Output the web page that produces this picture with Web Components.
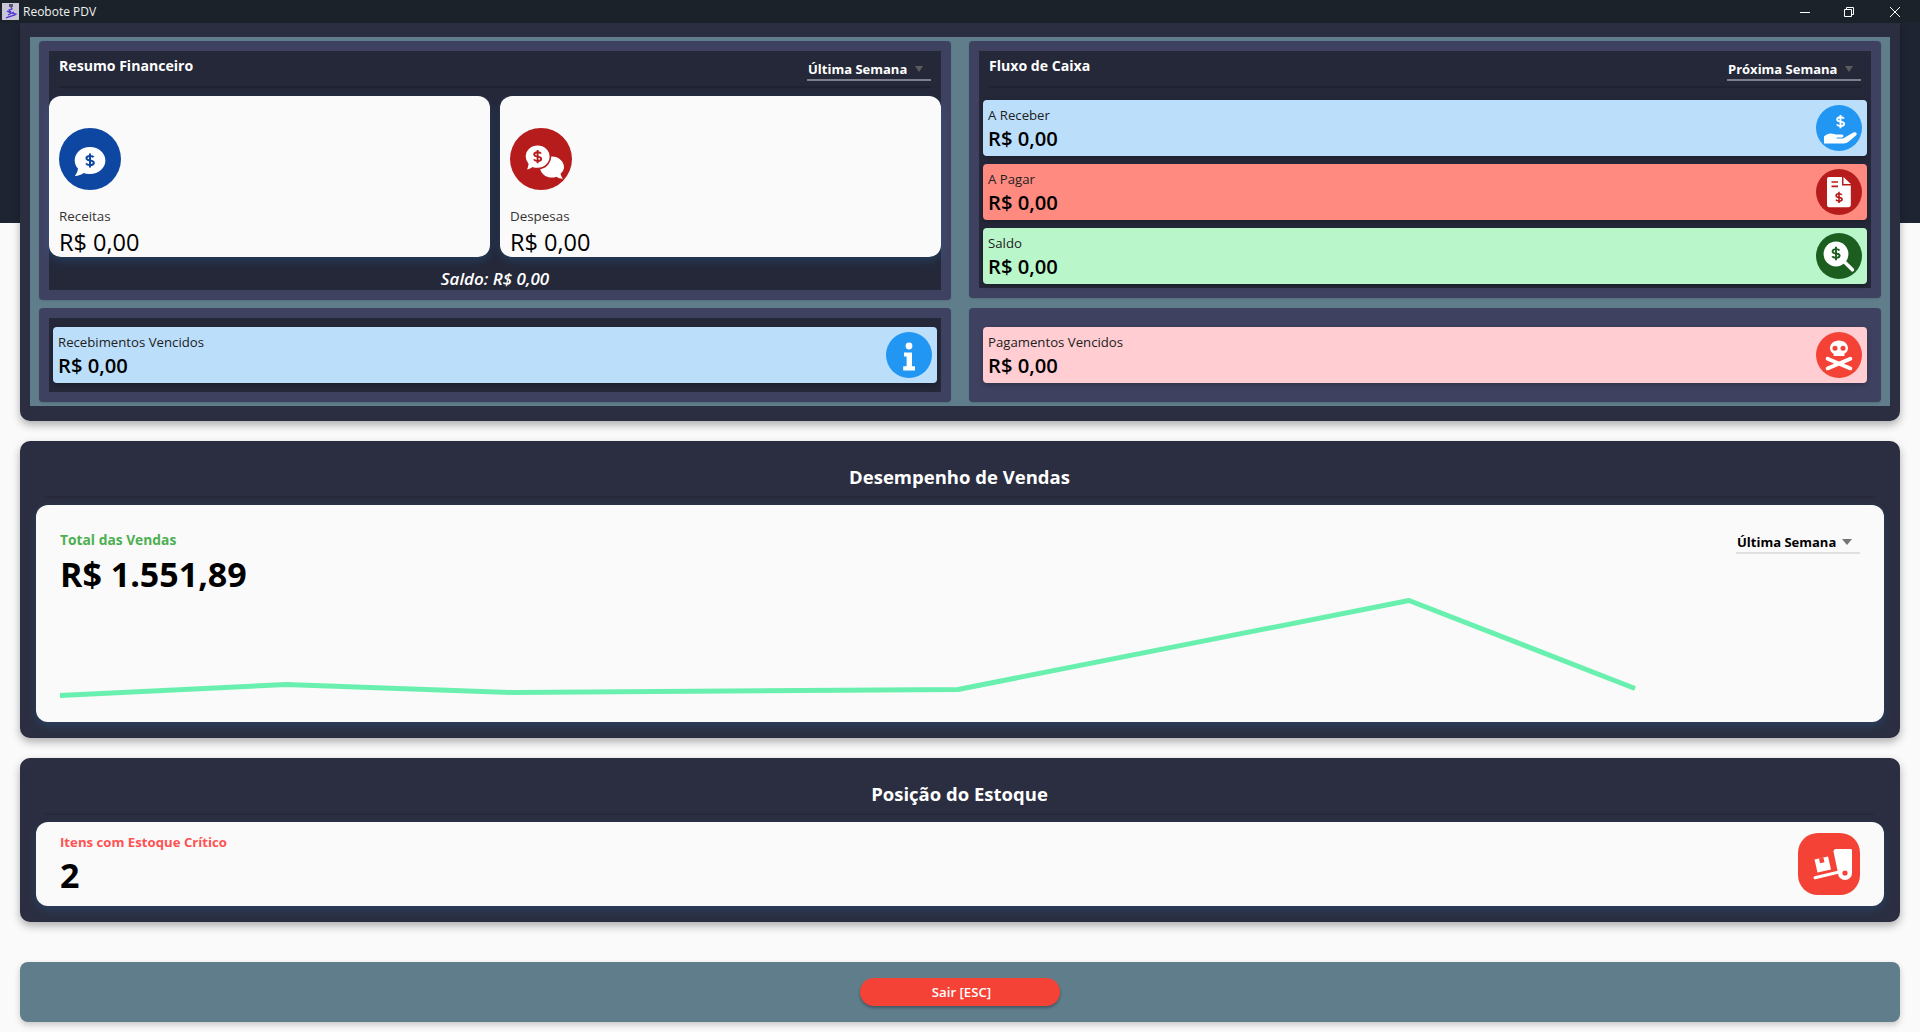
<!DOCTYPE html>
<html lang="pt-BR">
<head>
<meta charset="utf-8">
<title>Reobote PDV</title>
<style>
  html, body { margin: 0; height: 100%; }
  body { font-family: "Open Sans", "Noto Sans", sans-serif; background: #fafafa; overflow: hidden; }
</style>
</head>
<body>
<app-window>
  <title-bar slot="bar">Reobote PDV</title-bar>

  <finance-board>
    <dash-card>
      <card-header heading="Resumo Financeiro" period="Última Semana"></card-header>
      <div style="display:grid;grid-template-columns:1fr 1fr;gap:10px;margin-top:8px">
        <money-card label="Receitas" value="R$ 0,00" icon="income" color="#0d47a1"></money-card>
        <money-card label="Despesas" value="R$ 0,00" icon="expense" color="#b71c1c"></money-card>
      </div>
      <div style="height:33px;box-sizing:border-box;padding-top:10px;display:flex;align-items:center;justify-content:center;color:#fff;font:italic 600 17px 'Open Sans',sans-serif">Saldo: R$ 0,00</div>
    </dash-card>

    <dash-card>
      <card-header heading="Fluxo de Caixa" period="Próxima Semana"></card-header>
      <div style="display:flex;flex-direction:column;gap:8px;padding:12px 4px 4px">
        <flow-row label="A Receber" value="R$ 0,00" icon="hand" tint="#bbdefb" color="#2196f3"></flow-row>
        <flow-row label="A Pagar" value="R$ 0,00" icon="bill" tint="#ff8a80" color="#b71c1c"></flow-row>
        <flow-row label="Saldo" value="R$ 0,00" icon="search" tint="#b9f6ca" color="#1b5e20"></flow-row>
      </div>
    </dash-card>

    <dash-card>
      <div style="padding:9px 4px">
        <flow-row label="Recebimentos Vencidos" value="R$ 0,00" icon="info" tint="#bbdefb" color="#2196f3"></flow-row>
      </div>
    </dash-card>

    <dash-card plain>
      <div style="padding:9px 4px">
        <flow-row label="Pagamentos Vencidos" value="R$ 0,00" icon="skull" tint="#ffcdd2" color="#f44336"></flow-row>
      </div>
    </dash-card>
  </finance-board>

  <dash-panel heading="Desempenho de Vendas">
    <sales-chart label="Total das Vendas" value="R$ 1.551,89" period="Última Semana"></sales-chart>
  </dash-panel>

  <dash-panel heading="Posição do Estoque">
    <stock-card label="Itens com Estoque Crítico" value="2"></stock-card>
  </dash-panel>

  <exit-bar>Sair [ESC]</exit-bar>
</app-window>

<script>
const dollar = (x, y, s, c) => `<g transform="translate(${x} ${y}) scale(${s})" fill="none" stroke="${c}" stroke-width="2" stroke-linecap="butt">
  <path d="M3.6 -3.2C3 -4.4 1.8 -4.6 0 -4.6C-2.2 -4.6 -3.6 -3.6 -3.6 -2.2C-3.6 1 3.8 -1 3.8 2.2C3.8 3.8 2.2 4.6 0 4.6C-1.8 4.6 -3.2 4.2 -3.9 2.9"/>
  <path d="M0 -7V7"/></g>`

const icons = {
  income: c => `<svg viewBox="0 0 62 62"><path fill="#fff" d="M31 19C22 19 15.7 25 15.7 32.5C15.7 35.5 17 38.6 19 40.6C18.8 43 17.6 46 15.8 48C19.4 48 22.6 46.6 24.6 45C26.4 45.6 28.6 46 31 46C39.6 46 46.4 40 46.4 32.5C46.4 25 39.6 19 31 19Z"/>${dollar(31, 32.5, 1, c)}</svg>`,
  expense: c => `<svg viewBox="0 0 62 62"><path fill="#fff" d="M42 28.6C35.4 28.6 30 33.4 30 39.2C30 45 35.4 49.6 42 49.6C43.6 49.6 45 49.4 46.4 48.8C48 50 50.2 50.8 53 50.8C51.6 49.4 50.8 47.6 50.6 45.6C52.6 43.8 54 41.6 54 39.2C54 33.4 48.6 28.6 42 28.6Z"/><path fill="#fff" stroke="${c}" stroke-width="1.6" d="M27.6 16.7C20.6 16.7 14.9 22 14.9 28.6C14.9 31.6 16 34 17.8 36C17.6 38.2 16.8 40.6 15.4 42.6C18.4 42.6 21 41.4 22.8 40C24.2 40.4 25.8 40.6 27.6 40.6C34.6 40.6 40.4 35.2 40.4 28.6C40.4 22 34.6 16.7 27.6 16.7Z"/>${dollar(27.6, 28.6, .95, c)}</svg>`,
  hand: c => `<svg viewBox="0 0 46 46">${dollar(24.5, 16.6, .95, '#fff')}<path fill="#fff" d="M8 31.5C10 29.5 12.4 28.4 15 28.4C17.4 28.4 19 29.6 21 29.6H26C27.8 29.6 28 32.6 26 32.6H20.6V33.6H27L37.4 27.6C39.6 26.4 41.8 28.2 40.2 30.2L32.8 36.6C31.4 37.8 30 38.6 27.6 38.6H8Z"/></svg>`,
  bill: c => `<svg viewBox="0 0 46 46"><path fill="#fff" d="M13 8H26V16.5H34.8V36C34.8 37.2 33.8 38.2 32.6 38.2H13C11.8 38.2 11 37.2 11 36V10C11 8.8 11.8 8 13 8Z"/><path fill="#fff" d="M27.5 8L34.8 15H27.5Z"/><path fill="none" stroke="${c}" stroke-width="1.6" d="M15.5 13H22M15.5 17.4H22"/>${dollar(23, 28.4, .8, c)}</svg>`,
  search: c => `<svg viewBox="0 0 46 46"><circle cx="20" cy="21" r="12.4" fill="#fff"/><path stroke="#fff" stroke-width="3.6" stroke-linecap="round" d="M29 29.5L36.4 36.8"/>${dollar(20, 20.5, .95, c)}</svg>`,
  info: () => `<svg viewBox="0 0 46 46"><circle cx="23" cy="14" r="3.4" fill="#fff"/><path fill="#fff" d="M18 20.4H26V34.2H29V38.4H17.2V34.2H20.6V24.4H18Z"/></svg>`,
  skull: c => `<svg viewBox="0 0 46 46"><path fill="#fff" d="M23 8.4C17.6 8.4 14 12 14 16C14 18.6 15.4 20.6 17.6 21.8V24H28.4V21.8C30.6 20.6 32 18.6 32 16C32 12 28.4 8.4 23 8.4Z"/><circle cx="19" cy="16.2" r="2.5" fill="${c}"/><circle cx="27" cy="16.2" r="2.5" fill="${c}"/><path stroke="#fff" stroke-width="3.8" stroke-linecap="round" d="M11.6 26.8L34.4 36.4M34.4 26.8L11.6 36.4"/></svg>`,
  dolly: c => `<svg viewBox="0 0 62 62"><path fill="#fff" d="M35.5 18.5C35.5 17 36.5 16 38 16H52.5C53.5 16 54 16.5 54 17.5V40H40Z"/><circle cx="47" cy="40" r="7" fill="#fff"/><circle cx="47" cy="40" r="2.6" fill="${c}"/><path stroke="#fff" stroke-width="3" stroke-linecap="round" d="M17 44.7L41 39"/><path fill="#fff" d="M16.5 26.5L30 23.5L33 36.5L19.5 39.5Z"/><path fill="${c}" d="M21 25.5L25.4 24.5L26.4 29.2L22 30.2Z"/></svg>`
}

const selectTemplate = document.createElement('template')
selectTemplate.innerHTML = `
  <style>
    :host { display: inline-flex; align-items: center; justify-content: space-between; box-sizing: border-box;
      width: var(--select-width, 124px); height: 22px; padding: 0 8px 0 1px; font: 700 13px/var(--select-lh, 20px) "Open Sans", sans-serif;
      color: var(--select-color, #fff); border-bottom: 2px solid var(--select-line, #7d7f8c); }
    i { width: 0; height: 0; border: var(--select-arrow-size, 4.5px) solid transparent; border-top: 6px solid var(--select-arrow, #5c5c5c); border-bottom: 0; }
  </style>
  <span></span><i></i>
`

class PeriodSelect extends HTMLElement {
  static observedAttributes = ['label']

  constructor() {
    super()
    this.attachShadow({ mode: 'open' })
    this.shadowRoot.appendChild(selectTemplate.content.cloneNode(true))
  }

  attributeChangedCallback(name, oldValue, value) {
    this.shadowRoot.querySelector('span').textContent = value
  }
}
customElements.define('period-select', PeriodSelect)

const barTemplate = document.createElement('template')
barTemplate.innerHTML = `
  <style>
    :host { display: flex; align-items: center; height: 23px; background: #1b2229; color: #f2f2f2; font: 12px "Open Sans", sans-serif; }
    svg.logo { width: 17px; height: 17px; margin: 0 4px 0 2px; }
    .grow { flex: 1; }
    button { all: unset; width: 46px; height: 23px; display: flex; align-items: center; justify-content: center; }
    button svg { width: 12px; height: 12px; fill: none; stroke: #fff; stroke-width: 1; }
  </style>
  <svg class="logo" viewBox="0 0 17 17">
    <rect width="17" height="17" fill="#c9c6d6"/>
    <path fill="none" stroke="#4a2fd6" stroke-width="1.2" d="M4 15C7 13 12 13 14 11C11 10 7 10 5 8M8 2L10 6L7 7L9 9M6 12L12 9"/>
    <path fill="#5b5570" d="M7 1H11V4H7Z"/>
  </svg>
  <span><slot></slot></span>
  <span class="grow"></span>
  <button style="margin-right:-1px;transform:translateX(1px)"><svg viewBox="0 0 12 12"><path d="M1 6.5H11"/></svg></button>
  <button><svg viewBox="0 0 12 12"><path d="M1.5 3.5H8.5V10.5H1.5ZM3.5 3.5V1.5H10.5V8.5H8.5"/></svg></button>
  <button style="margin-right:2px"><svg viewBox="0 0 12 12"><path d="M1 1L11 11M11 1L1 11"/></svg></button>
`

class TitleBar extends HTMLElement {
  constructor() {
    super()
    this.attachShadow({ mode: 'open' })
    this.shadowRoot.appendChild(barTemplate.content.cloneNode(true))
  }
}
customElements.define('title-bar', TitleBar)

const windowTemplate = document.createElement('template')
windowTemplate.innerHTML = `
  <style>
    :host { display: flex; flex-direction: column; height: 1032px;
      background: linear-gradient(#1f2433 0 223px, #fafafa 223px); }
    main { display: flex; flex-direction: column; padding: 0 20px; }
  </style>
  <slot name="bar"></slot>
  <main><slot></slot></main>
`

class AppWindow extends HTMLElement {
  constructor() {
    super()
    this.attachShadow({ mode: 'open' })
    this.shadowRoot.appendChild(windowTemplate.content.cloneNode(true))
  }
}
customElements.define('app-window', AppWindow)

const boardTemplate = document.createElement('template')
boardTemplate.innerHTML = `
  <style>
    :host { display: block; height: 398px; box-sizing: border-box; padding: 14px 10px 15px; background: #2b2e40;
      border-radius: 0 0 10px 10px; box-shadow: 0 4px 8px rgba(0,0,0,.3); }
    .teal { display: grid; grid-template-columns: 912px 912px; grid-template-rows: 259px 94px; column-gap: 18px; row-gap: 8px;
      padding: 4px 9px; height: 369px; box-sizing: border-box; background: #607d8b; align-items: start; }
  </style>
  <div class="teal"><slot></slot></div>
`

class FinanceBoard extends HTMLElement {
  constructor() {
    super()
    this.attachShadow({ mode: 'open' })
    this.shadowRoot.appendChild(boardTemplate.content.cloneNode(true))
  }
}
customElements.define('finance-board', FinanceBoard)

const cardTemplate = document.createElement('template')
cardTemplate.innerHTML = `
  <style>
    :host { display: block; padding: 10px; background: #3e4260; border-radius: 4px; box-shadow: 0 1px 2px rgba(0,0,0,.12); }
    .inner { background: #252839; }
    :host([plain]) .inner { background: transparent; }
  </style>
  <div class="inner"><slot></slot></div>
`

class DashCard extends HTMLElement {
  constructor() {
    super()
    this.attachShadow({ mode: 'open' })
    this.shadowRoot.appendChild(cardTemplate.content.cloneNode(true))
  }
}
customElements.define('dash-card', DashCard)

const headerTemplate = document.createElement('template')
headerTemplate.innerHTML = `
  <style>
    :host { display: flex; justify-content: space-between; align-items: flex-start; height: 37px; box-sizing: border-box; margin: 0 10px;
      border-bottom: 2px solid #1f2231; }
    b { font: 700 14.1px/20px "Open Sans", sans-serif; color: #fff; margin-top: 5px; }
    period-select { margin-top: 8px; }
  </style>
  <b></b><period-select></period-select>
`

class CardHeader extends HTMLElement {
  constructor() {
    super()
    this.attachShadow({ mode: 'open' })
    this.shadowRoot.appendChild(headerTemplate.content.cloneNode(true))
  }

  connectedCallback() {
    this.shadowRoot.querySelector('b').textContent = this.getAttribute('heading')
    const select = this.shadowRoot.querySelector('period-select')
    select.setAttribute('label', this.getAttribute('period'))
    if (this.getAttribute('period').startsWith('Próxima')) select.style.setProperty('--select-width', '134px')
  }
}
customElements.define('card-header', CardHeader)

const moneyTemplate = document.createElement('template')
moneyTemplate.innerHTML = `
  <style>
    :host { display: flex; flex-direction: column; height: 161px; box-sizing: border-box; padding: 32px 10px 0; background: #fafafa;
      border-radius: 12px; box-shadow: 0 4px 10px rgba(33,150,243,.18); color: #000; }
    .icon { width: 62px; height: 62px; border-radius: 50%; display: block; }
    .icon svg { display: block; width: 100%; height: 100%; }
    .label { font: 400 13.4px/18px "Open Sans", sans-serif; color: #333; margin-top: 17px; }
    .value { font: 400 23.5px/32px "Open Sans", sans-serif; margin-top: 1px; }
  </style>
  <div class="icon"></div><div class="label"></div><div class="value"></div>
`

class MoneyCard extends HTMLElement {
  constructor() {
    super()
    this.attachShadow({ mode: 'open' })
    this.shadowRoot.appendChild(moneyTemplate.content.cloneNode(true))
  }

  connectedCallback() {
    const color = this.getAttribute('color')
    const icon = this.shadowRoot.querySelector('.icon')
    icon.style.background = color
    icon.innerHTML = icons[this.getAttribute('icon')](color)
    this.shadowRoot.querySelector('.label').textContent = this.getAttribute('label')
    this.shadowRoot.querySelector('.value').textContent = this.getAttribute('value')
  }
}
customElements.define('money-card', MoneyCard)

const rowTemplate = document.createElement('template')
rowTemplate.innerHTML = `
  <style>
    :host { display: flex; justify-content: space-between; height: 56px; box-sizing: border-box; padding: 5px; border-radius: 4px;
      box-shadow: 0 2px 5px rgba(0,0,0,.25); color: #000; }
    .label { font: 400 13.2px/18px "Open Sans", sans-serif; margin-top: 1px; color: #212121; }
    .value { font: 600 20.2px/24px "Open Sans", sans-serif; margin-top: 2px; }
    .icon { width: 46px; height: 46px; border-radius: 50%; }
    .icon svg { display: block; width: 100%; height: 100%; }
  </style>
  <div><div class="label"></div><div class="value"></div></div><div class="icon"></div>
`

class FlowRow extends HTMLElement {
  constructor() {
    super()
    this.attachShadow({ mode: 'open' })
    this.shadowRoot.appendChild(rowTemplate.content.cloneNode(true))
  }

  connectedCallback() {
    const color = this.getAttribute('color')
    const icon = this.shadowRoot.querySelector('.icon')
    this.style.background = this.getAttribute('tint')
    icon.style.background = color
    icon.innerHTML = icons[this.getAttribute('icon')](color)
    this.shadowRoot.querySelector('.label').textContent = this.getAttribute('label')
    this.shadowRoot.querySelector('.value').textContent = this.getAttribute('value')
  }
}
customElements.define('flow-row', FlowRow)

const panelTemplate = document.createElement('template')
panelTemplate.innerHTML = `
  <style>
    :host { display: block; margin-top: 20px; padding: 0 16px 16px; background: #2b2e40; border-radius: 10px;
      box-shadow: 0 4px 8px rgba(0,0,0,.3); }
    h2 { margin: 0 10px 7px 9px; padding: 22px 0 5px; font: 700 18.5px/28px "Open Sans", sans-serif; color: #fff; text-align: center;
      border-bottom: 2px solid #262938; }
  </style>
  <h2></h2>
  <slot></slot>
`

class DashPanel extends HTMLElement {
  constructor() {
    super()
    this.attachShadow({ mode: 'open' })
    this.shadowRoot.appendChild(panelTemplate.content.cloneNode(true))
  }

  connectedCallback() {
    this.shadowRoot.querySelector('h2').textContent = this.getAttribute('heading')
  }
}
customElements.define('dash-panel', DashPanel)

const chartTemplate = document.createElement('template')
chartTemplate.innerHTML = `
  <style>
    :host { display: block; height: 217px; background: #fafafa; border-radius: 12px; box-shadow: 0 4px 10px rgba(33,150,243,.18); }
    .head { display: flex; justify-content: space-between; height: 87px; box-sizing: border-box; padding: 26px 24px 0; }
    .label { font: 700 13.8px/18px "Open Sans", sans-serif; color: #4caf50; }
    .value { font: 700 34px/46px "Open Sans", sans-serif; color: #000; margin-top: 2px; }
    period-select { --select-color: #000; --select-line: #e0e0e0; --select-arrow: #757575; --select-arrow-size: 5px; --select-lh: 22px; margin-top: 1px; }
    svg { display: block; width: 1848px; height: 130px; }
  </style>
  <div class="head">
    <div><div class="label"></div><div class="value"></div></div>
    <period-select></period-select>
  </div>
  <svg viewBox="0 0 1848 130"><path fill="none" stroke="#69f0ae" stroke-width="5" stroke-linejoin="round"
    d="M24 103.5L250 92.5L477 100.5L922 97.5L1373 8.5L1599 96.5"/></svg>
`

class SalesChart extends HTMLElement {
  constructor() {
    super()
    this.attachShadow({ mode: 'open' })
    this.shadowRoot.appendChild(chartTemplate.content.cloneNode(true))
  }

  connectedCallback() {
    this.shadowRoot.querySelector('.label').textContent = this.getAttribute('label')
    this.shadowRoot.querySelector('.value').textContent = this.getAttribute('value')
    this.shadowRoot.querySelector('period-select').setAttribute('label', this.getAttribute('period'))
  }
}
customElements.define('sales-chart', SalesChart)

const stockTemplate = document.createElement('template')
stockTemplate.innerHTML = `
  <style>
    :host { display: flex; justify-content: space-between; align-items: center; height: 84px; box-sizing: border-box; padding: 0 24px;
      background: #fafafa; border-radius: 12px; box-shadow: 0 4px 10px rgba(33,150,243,.18); }
    .text { padding-top: 3px; }
    .label { font: 700 13.2px/18px "Open Sans", sans-serif; color: #ff5252; }
    .value { font: 700 34px/46px "Open Sans", sans-serif; color: #000; margin-top: 1px; }
    .icon { width: 62px; height: 62px; border-radius: 20px; background: #f44336; }
    .icon svg { display: block; width: 100%; height: 100%; }
  </style>
  <div class="text"><div class="label"></div><div class="value"></div></div>
  <div class="icon"></div>
`

class StockCard extends HTMLElement {
  constructor() {
    super()
    this.attachShadow({ mode: 'open' })
    this.shadowRoot.appendChild(stockTemplate.content.cloneNode(true))
  }

  connectedCallback() {
    this.shadowRoot.querySelector('.label').textContent = this.getAttribute('label')
    this.shadowRoot.querySelector('.value').textContent = this.getAttribute('value')
    this.shadowRoot.querySelector('.icon').innerHTML = icons.dolly('#f44336')
  }
}
customElements.define('stock-card', StockCard)

const exitTemplate = document.createElement('template')
exitTemplate.innerHTML = `
  <style>
    :host { display: flex; justify-content: center; align-items: center; height: 60px; margin-top: 40px; background: #607d8b;
      border-radius: 8px; box-shadow: 0 3px 6px rgba(0,0,0,.2); }
    button { all: unset; box-sizing: border-box; width: 200px; height: 28px; padding-left: 3px; border-radius: 14px; background: #f44336; color: #fff;
      font: 600 13.2px/29px "Open Sans", sans-serif; text-align: center; box-shadow: 0 2px 3px rgba(0,0,0,.3); }
  </style>
  <button><slot></slot></button>
`

class ExitBar extends HTMLElement {
  constructor() {
    super()
    this.attachShadow({ mode: 'open' })
    this.shadowRoot.appendChild(exitTemplate.content.cloneNode(true))
  }
}
customElements.define('exit-bar', ExitBar)
</script>
</body>
</html>
